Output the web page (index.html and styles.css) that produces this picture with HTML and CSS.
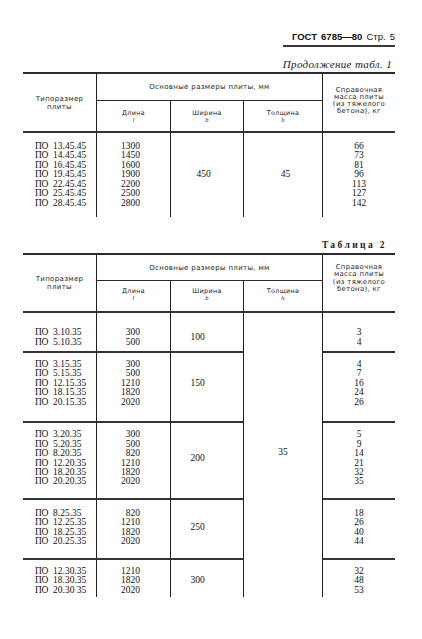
FILE: index.html
```html
<!DOCTYPE html>
<html lang="ru">
<head>
<meta charset="utf-8">
<title>ГОСТ 6785—80 Стр. 5</title>
<link rel="stylesheet" href="styles.css">
</head>
<body>
<div class="page">
  <div class="runhead"><b>ГОСТ 6785—80</b> Стр. 5</div>
  <div class="caption-cont">Продолжение табл. 1</div>

  <div class="grid t1">
    <div class="h hname vr">Типоразмер<br>плиты</div>
    <div class="h hgroup vr">Основные размеры плиты, мм</div>
    <div class="h hmass">Справочная<br>масса плиты<br>(из тяжелого<br>бетона), кг</div>
    <div class="h hsub c2 vr"><span>Длина</span><i>l</i></div>
    <div class="h hsub c3 vr"><span>Ширина</span><i>b</i></div>
    <div class="h hsub c4 vr"><span>Толщина</span><i>h</i></div>

    <div class="b name vr">
      <div><span class="po">ПО</span>13.45.45</div>
      <div><span class="po">ПО</span>14.45.45</div>
      <div><span class="po">ПО</span>16.45.45</div>
      <div><span class="po">ПО</span>19.45.45</div>
      <div><span class="po">ПО</span>22.45.45</div>
      <div><span class="po">ПО</span>25.45.45</div>
      <div><span class="po">ПО</span>28.45.45</div>
    </div>
    <div class="b len vr">
      <div>1300</div><div>1450</div><div>1600</div><div>1900</div><div>2200</div><div>2500</div><div>2800</div>
    </div>
    <div class="b wid wid1 vr"><div>450</div></div>
    <div class="b thk thk1 vr"><div>45</div></div>
    <div class="b mass">
      <div>66</div><div>73</div><div>81</div><div>96</div><div>113</div><div>127</div><div>142</div>
    </div>
  </div>

  <div class="caption-table">Таблица 2</div>

  <div class="grid t2">
    <div class="h hname vr">Типоразмер<br>плиты</div>
    <div class="h hgroup vr">Основные размеры плиты, мм</div>
    <div class="h hmass hmass2">Справочная<br>масса плиты<br>(из тяжелого<br>бетона), кг</div>
    <div class="h hsub hsub2 c2 vr"><span>Длина</span><i>l</i></div>
    <div class="h hsub hsub2 c3 vr"><span>Ширина</span><i>b</i></div>
    <div class="h hsub hsub2 c4 vr"><span>Толщина</span><i>h</i></div>

    <!-- group 1 -->
    <div class="b name g g1 vr">
      <div><span class="po">ПО</span>3.10.35</div>
      <div><span class="po">ПО</span>5.10.35</div>
    </div>
    <div class="b len g g1 vr"><div>300</div><div>500</div></div>
    <div class="b wid wid2 g g1 vr"><div>100</div></div>
    <div class="b thk thk2 vr"><div>35</div></div>
    <div class="b mass g g1"><div>3</div><div>4</div></div>

    <!-- group 2 -->
    <div class="b name g g2 vr">
      <div><span class="po">ПО</span>3.15.35</div>
      <div><span class="po">ПО</span>5.15.35</div>
      <div><span class="po">ПО</span>12.15.35</div>
      <div><span class="po">ПО</span>18.15.35</div>
      <div><span class="po">ПО</span>20.15.35</div>
    </div>
    <div class="b len g g2 vr"><div>300</div><div>500</div><div>1210</div><div>1820</div><div>2020</div></div>
    <div class="b wid wid2 g g2 vr"><div>150</div></div>
    <div class="b mass g g2"><div>4</div><div>7</div><div>16</div><div>24</div><div>26</div></div>

    <!-- group 3 -->
    <div class="b name g g3 vr">
      <div><span class="po">ПО</span>3.20.35</div>
      <div><span class="po">ПО</span>5.20.35</div>
      <div><span class="po">ПО</span>8.20.35</div>
      <div><span class="po">ПО</span>12.20.35</div>
      <div><span class="po">ПО</span>18.20.35</div>
      <div><span class="po">ПО</span>20.20.35</div>
    </div>
    <div class="b len g g3 vr"><div>300</div><div>500</div><div>820</div><div>1210</div><div>1820</div><div>2020</div></div>
    <div class="b wid wid2 g g3 vr"><div>200</div></div>
    <div class="b mass g g3"><div>5</div><div>9</div><div>14</div><div>21</div><div>32</div><div>35</div></div>

    <!-- group 4 -->
    <div class="b name g g4 vr">
      <div><span class="po">ПО</span>8.25.35</div>
      <div><span class="po">ПО</span>12.25.35</div>
      <div><span class="po">ПО</span>18.25.35</div>
      <div><span class="po">ПО</span>20.25.35</div>
    </div>
    <div class="b len g g4 vr"><div>820</div><div>1210</div><div>1820</div><div>2020</div></div>
    <div class="b wid wid2 g g4 vr"><div>250</div></div>
    <div class="b mass g g4"><div>18</div><div>26</div><div>40</div><div>44</div></div>

    <!-- group 5 -->
    <div class="b name g g5 vr">
      <div><span class="po">ПО</span>12.30.35</div>
      <div><span class="po">ПО</span>18.30.35</div>
      <div><span class="po">ПО</span>20.30 35</div>
    </div>
    <div class="b len g g5 vr"><div>1210</div><div>1820</div><div>2020</div></div>
    <div class="b wid wid2 g g5 vr"><div>300</div></div>
    <div class="b mass g g5"><div>32</div><div>48</div><div>53</div></div>
  </div>
</div>
</body>
</html>
```

FILE: styles.css
```css
* { box-sizing: border-box; }

html, body {
  margin: 0;
  padding: 0;
  background: #ffffff;
}

body {
  width: 422px;
  height: 639px;
  overflow: hidden;
  color: #121212;
  font-family: "Liberation Serif", "Times New Roman", serif;
}

.page {
  padding: 31px 27px 0 23px;
}

.runhead {
  width: 112px;
  margin-left: auto;
  text-align: right;
  font-family: "Liberation Sans", Arial, sans-serif;
  font-size: 9.5px;
  line-height: 12px;
  word-spacing: 1.5px;
  padding-bottom: 2px;
  border-bottom: 2px solid #3a3a3a;
  color: #111;
}

.runhead b {
  font-weight: bold;
}

.caption-cont {
  margin-top: 11px;
  text-align: right;
  padding-right: 3px;
  font-style: italic;
  font-size: 11px;
  line-height: 12px;
  letter-spacing: 0.35px;
  color: #1a1a1a;
}

.caption-table {
  margin-top: 22px;
  text-align: right;
  padding-right: 8px;
  font-weight: bold;
  font-size: 9.5px;
  line-height: 12px;
  letter-spacing: 2.4px;
  color: #1a1a1a;
}

.grid {
  display: grid;
  grid-template-columns: 74px 74px 73px 79px 72px;
  border-top: 2px solid #2a2a2a;
}

.t1 {
  margin-top: 2px;
  grid-template-rows: 27px 30px 86px;
}

.t2 {
  margin-top: 2px;
  grid-template-rows: 26px 30px 40px 70px 77px 60px 39px;
}

.vr { border-right: 1px solid #202020; }

/* header cells */
.h {
  display: flex;
  flex-direction: column;
  align-items: center;
  justify-content: center;
  text-align: center;
  font-family: "DejaVu Sans", sans-serif;
  font-size: 7px;
  letter-spacing: 0.35px;
  color: #1c1c1c;
}

.hname {
  grid-column: 1;
  grid-row: 1 / 3;
  line-height: 8px;
}

.hgroup {
  grid-column: 2 / 5;
  grid-row: 1;
  border-bottom: 1px solid #2a2a2a;
  line-height: 8px;
}

.hmass {
  grid-column: 5;
  grid-row: 1 / 3;
  line-height: 7.2px;
  font-size: 6.9px;
  padding-bottom: 3px;
}

.hmass2 { padding-bottom: 9px; }

.hsub {
  grid-row: 2;
  font-size: 6.4px;
  gap: 0;
}

.hsub span {
  display: block;
  line-height: 7px;
}

.hsub i {
  display: block;
  font-family: "Liberation Serif", serif;
  font-size: 6.4px;
  line-height: 6px;
}

.hsub2 { padding-bottom: 3px; }

.c2 { grid-column: 2; }
.c3 { grid-column: 3; }
.c4 { grid-column: 4; }

/* body cells */
.b {
  display: flex;
  flex-direction: column;
  justify-content: center;
  border-top: 2px solid #333;
  font-size: 9.5px;
  line-height: 9.45px;
  white-space: nowrap;
}

.name {
  grid-column: 1;
  align-items: flex-start;
  padding-left: 12px;
}

.po {
  display: inline-block;
  width: 18px;
  letter-spacing: -0.3px;
}

.len {
  grid-column: 2;
  align-items: flex-end;
  padding-right: 30px;
}

.wid { grid-column: 3; align-items: center; }
.wid1 { padding-right: 7px; }
.wid2 { padding-right: 19px; }

.thk { grid-column: 4; align-items: center; }
.thk1 { padding-left: 5px; }
.thk2 { grid-row: 3 / 8; padding-bottom: 4px; }

.mass { grid-column: 5; align-items: center; }

/* table 2 groups */
.g1 { grid-row: 3; padding-top: 11px; }
.g2 { grid-row: 4; padding-bottom: 7px; }
.g3 { grid-row: 5; padding-bottom: 4px; }
.g4 { grid-row: 6; padding-bottom: 3px; }
.g5 { grid-row: 7; padding-top: 5px; }
```
